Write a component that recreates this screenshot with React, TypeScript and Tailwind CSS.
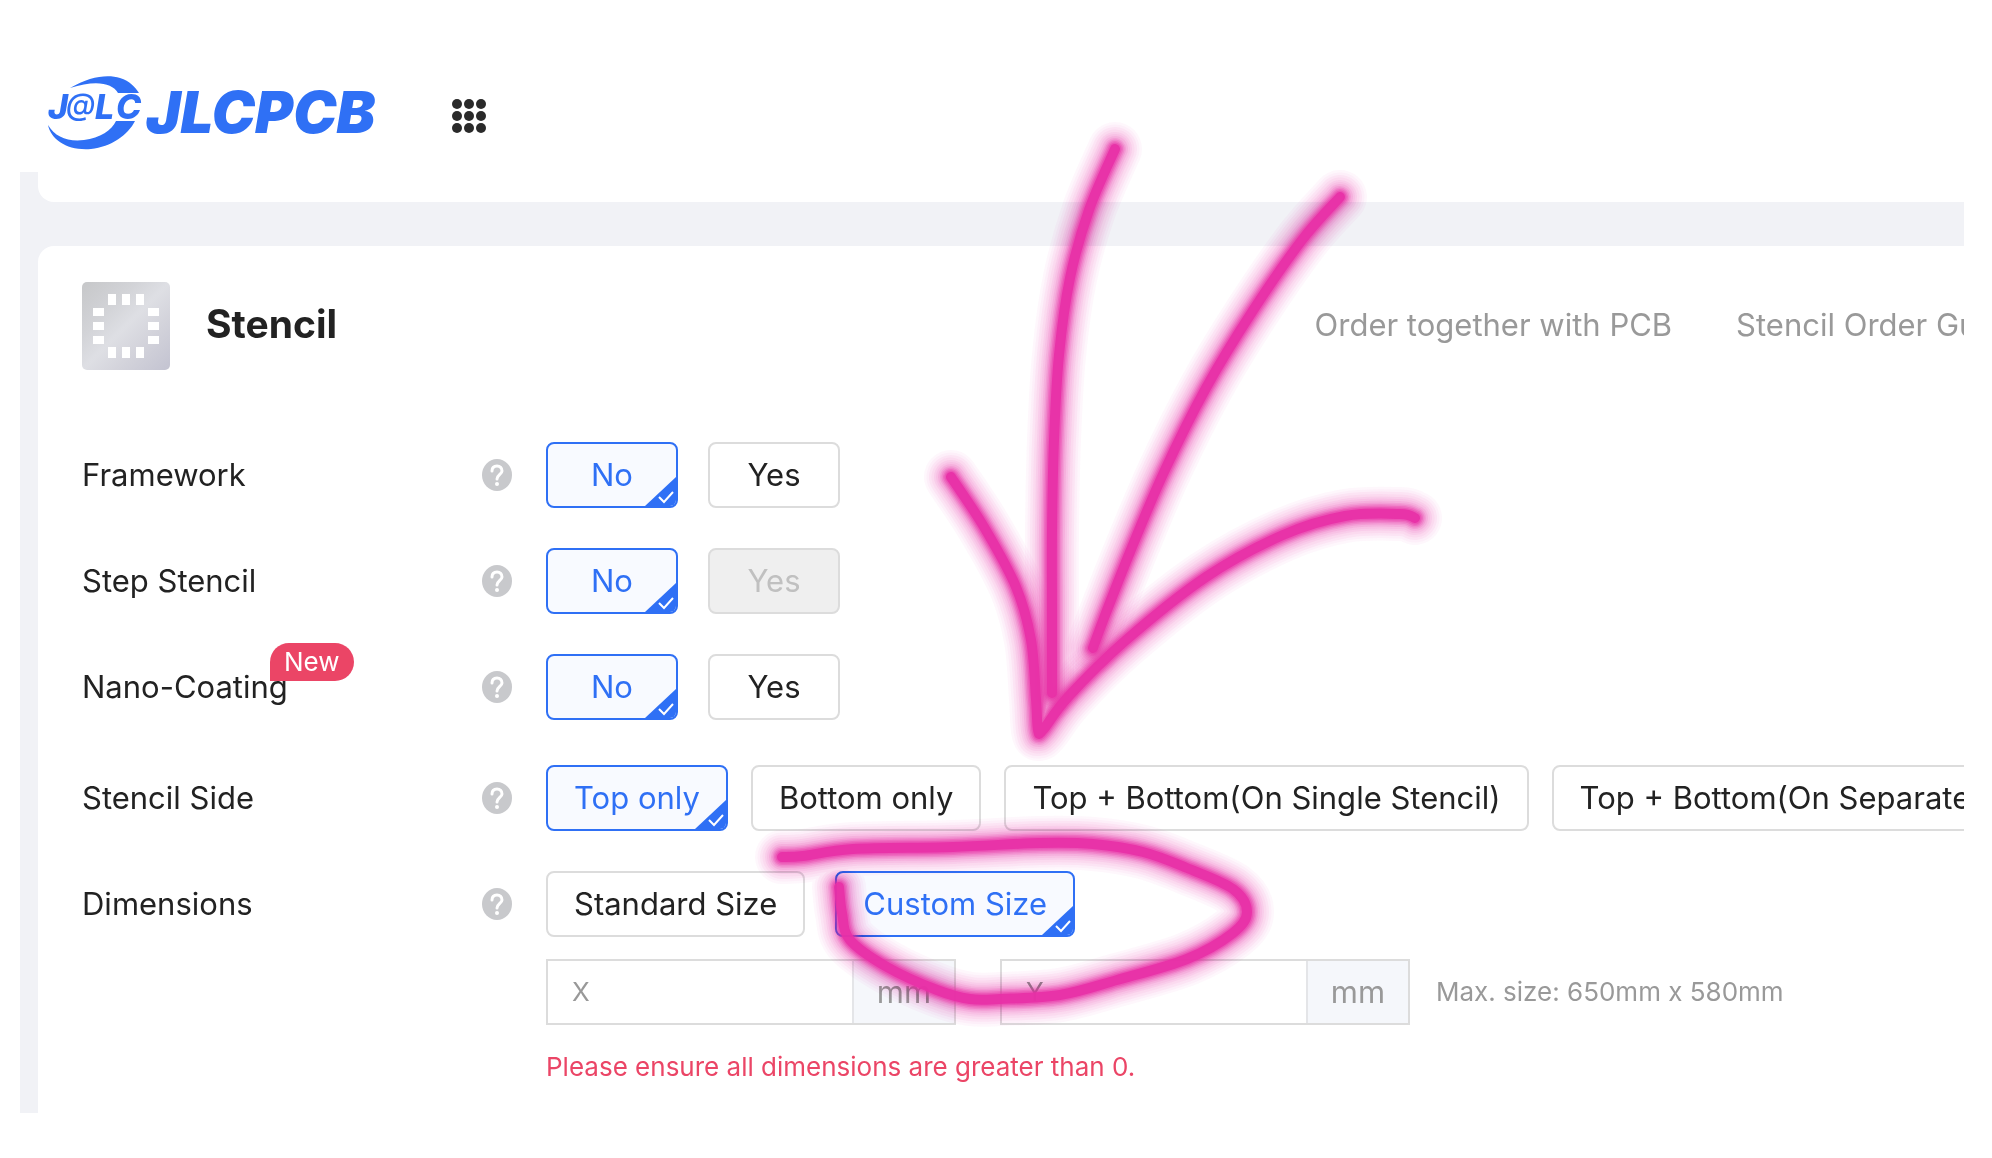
import React, { useState } from "react";
import clsx from "clsx";

type Point = [number, number];

interface Option {
  label: string;
  disabled?: boolean;
}

interface OptionRowProps {
  label: string;
  options: Option[];
  initial: string;
  badge?: string;
  tight?: boolean;
  children?: React.ReactNode;
}

interface Layer {
  width: number;
  opacity: number;
}

// --- Marker strokes drawn over the page ---
const STROKES: Point[][] = [
  [[1115, 149], [1089, 210], [1070, 278], [1059, 355], [1054, 440], [1052, 531], [1052, 610], [1052, 693]],
  [[1340, 197], [1302, 240], [1252, 312], [1206, 388], [1164, 472], [1130, 552], [1104, 618], [1093, 648]],
  [[951, 477], [984, 527], [1016, 587], [1031, 640], [1036, 699], [1038, 730], [1043, 730], [1068, 697], [1125, 641], [1206, 577], [1283, 535], [1345, 516], [1400, 514], [1415, 518]],
  [[782, 857], [803, 856], [853, 849], [953, 847], [1040, 843], [1093, 844], [1143, 852], [1187, 868], [1233, 889], [1247, 912], [1233, 933], [1187, 959], [1117, 980], [1060, 995], [1000, 999], [970, 999], [937, 990], [887, 967], [850, 940], [842, 913], [839, 887]],
];

// Wide faint strokes tint what is below, the narrow ones cover it
const GLOW: Layer[] = [
  { width: 54, opacity: 0.04 },
  { width: 49, opacity: 0.04 },
  { width: 44, opacity: 0.05 },
  { width: 39, opacity: 0.05 },
  { width: 34, opacity: 0.07 },
  { width: 30, opacity: 0.08 },
  { width: 26, opacity: 0.11 },
];

const CORE: Layer[] = [
  { width: 22, opacity: 0.15 },
  { width: 19, opacity: 0.2 },
  { width: 16, opacity: 0.28 },
  { width: 13, opacity: 0.38 },
  { width: 10, opacity: 0.9 },
];

const smoothPath = (points: Point[]) =>
  points.slice(1).reduce((d, p2, i) => {
    const p0 = points[Math.max(0, i - 1)];
    const p1 = points[i];
    const p3 = points[Math.min(points.length - 1, i + 2)];
    const c1 = `${p1[0] + (p2[0] - p0[0]) / 6} ${p1[1] + (p2[1] - p0[1]) / 6}`;
    const c2 = `${p2[0] - (p3[0] - p1[0]) / 6} ${p2[1] - (p3[1] - p1[1]) / 6}`;
    return `${d} C${c1} ${c2} ${p2[0]} ${p2[1]}`;
  }, `M${points[0][0]} ${points[0][1]}`);

const Scribble = ({ layers, multiply }: { layers: Layer[]; multiply?: boolean }) => (
  <svg
    width="1992"
    height="1158"
    viewBox="0 0 1992 1158"
    fill="none"
    aria-hidden="true"
    className={clsx("absolute top-0 left-0 max-w-none pointer-events-none", multiply && "mix-blend-multiply")}
  >
    {STROKES.map((points, i) => (
      <g key={i} stroke="#e830a6" strokeLinecap="round" strokeLinejoin="round">
        {layers.map((l) => (
          <path key={l.width} d={smoothPath(points)} strokeWidth={l.width} strokeOpacity={l.opacity} />
        ))}
      </g>
    ))}
  </svg>
);

const Logo = () => (
  <svg width="340" height="80" viewBox="0 0 340 80" fill="#2f70f5" role="img" aria-label="JLCPCB">
    <path d="M22 12 C42 0 60 -2 72 2 C82 5 87 11 91 17 L70 17 C64 6 46 4 22 12 Z" />
    <path d="M0 49 C7 61 20 66 36 64 C52 62 64 54 68 45 L87 45 C80 59 63 71 43 73 C20 75 3 64 0 49 Z" />
    <g fontFamily="Inter, sans-serif">
      <text x="0" y="43" fontSize="34" fontWeight="800" fontStyle="italic">J</text>
      <text x="18" y="39" fontSize="30" fontWeight="500" fontStyle="italic">@</text>
      <text x="47" y="43" fontSize="34" fontWeight="800" fontStyle="italic">L</text>
      <text x="68" y="43" fontSize="34" fontWeight="800" fontStyle="italic">C</text>
      <text x="98" y="57" fontSize="58" fontWeight="900" fontStyle="italic">JLCPCB</text>
    </g>
  </svg>
);

const GridDots = () => (
  <svg width="34" height="34" viewBox="0 0 34 34" fill="#2a2a2a" aria-hidden="true">
    {[5, 17, 29].map((y) => [5, 17, 29].map((x) => <circle key={`${x}-${y}`} cx={x} cy={y} r="5" />))}
  </svg>
);

const StencilIcon = () => (
  <svg width="88" height="88" viewBox="0 0 88 88" aria-hidden="true" className="shrink-0">
    <defs>
      <linearGradient id="steel" x1="0" y1="0" x2="1" y2="1">
        <stop offset="0" stopColor="#c6c7c9" />
        <stop offset="0.3" stopColor="#d2d3d7" />
        <stop offset="0.5" stopColor="#dedfe4" />
        <stop offset="0.7" stopColor="#d3d3db" />
        <stop offset="1" stopColor="#c3c3d1" />
      </linearGradient>
    </defs>
    <rect width="88" height="88" rx="5" fill="url(#steel)" />
    <g fill="#fff">
      {[26, 40, 54].map((n) => (
        <React.Fragment key={n}>
          <rect x={n} y="12" width="8" height="11" />
          <rect x={n} y="65" width="8" height="11" />
          <rect x="11" y={n} width="11" height="8" />
          <rect x="66" y={n} width="11" height="8" />
        </React.Fragment>
      ))}
    </g>
  </svg>
);

const HelpIcon = () => (
  <svg width="30" height="32" viewBox="0 0 30 32" fill="none" aria-hidden="true">
    <ellipse cx="15" cy="16" rx="15" ry="16" fill="#c8c9cc" />
    <path d="M10 12 C10 8 12 7 15 7 C18 7 20 9 20 12 C20 15 15 16 15 20" stroke="#fff" strokeWidth="3" strokeLinecap="round" />
    <circle cx="15" cy="25" r="2" fill="#fff" />
  </svg>
);

const CheckCorner = () => (
  <svg width="31" height="29" viewBox="0 0 31 29" fill="none" aria-hidden="true" className="absolute right-0 bottom-0">
    <path d="M31 0 V29 H0 Z" fill="#2f70f5" />
    <path d="M14 20 L19 25 L28 15" stroke="#fff" strokeWidth="2" />
  </svg>
);

const OptionRow = ({ label, options, initial, badge, tight, children }: OptionRowProps) => {
  const [selected, setSelected] = useState(initial);

  return (
    <div className="flex items-start">
      <div className="flex h-[66px] w-[464px] shrink-0 items-center">
        <span className="relative w-[400px]">
          {label}
          {badge && (
            <span className="absolute -top-6 left-[188px] h-[38px] rounded-[19px] rounded-bl-none bg-[#eb4566] px-[14px] text-[26px] leading-[38px] text-white">
              {badge}
            </span>
          )}
        </span>
        <button type="button" aria-label={`About ${label}`}>
          <HelpIcon />
        </button>
      </div>
      <div className="flex flex-col">
        <div role="group" aria-label={label} className={clsx("flex", tight ? "gap-[23px]" : "gap-[30px]")}>
          {options.map((option) => {
            const active = option.label === selected;
            return (
              <button
                key={option.label}
                type="button"
                disabled={option.disabled}
                aria-pressed={active}
                onClick={() => setSelected(option.label)}
                className={clsx(
                  "relative h-[66px] min-w-[132px] shrink-0 overflow-hidden rounded-lg border-2 px-[26px] whitespace-nowrap",
                  active && "border-[#2f70f5] bg-[#f8faff] text-[#2f70f5]",
                  !active && !option.disabled && "border-[#dcdcdc] bg-white",
                  option.disabled && "border-[#dcdcdc] bg-[#efefef] text-[#c0c0c0]"
                )}
              >
                {option.label}
                {active && <CheckCorner />}
              </button>
            );
          })}
        </div>
        {children}
      </div>
    </div>
  );
};

const SizeInput = ({ axis }: { axis: string }) => {
  const [value, setValue] = useState("");

  return (
    <label className="flex h-[66px] w-[410px] border-2 border-[#dcdcdc]">
      <input
        type="text"
        aria-label={`${axis} dimension`}
        placeholder={axis}
        value={value}
        onChange={(e) => setValue(e.target.value)}
        className="min-w-0 flex-1 px-6 text-[26px] outline-none placeholder:text-[#999999]"
      />
      <span className="flex w-[102px] items-center justify-center border-l-2 border-[#e4e5e8] bg-[#f5f7fb] text-[31px] text-[#999999]">
        mm
      </span>
    </label>
  );
};

const App = () => {
  return (
    <div className="relative isolate min-h-screen overflow-hidden bg-white font-['Inter',sans-serif] text-[31px] leading-10 text-[#222222]">
      {/* Top bar */}
      <header className="flex h-[172px] items-center gap-16 pt-[60px] pl-12">
        <a href="#home">
          <Logo />
        </a>
        <button type="button" aria-label="All services">
          <GridDots />
        </button>
      </header>

      <main className="mr-7 ml-5 overflow-hidden bg-[#f1f2f6] pl-[18px]">
        <div className="h-[30px] rounded-bl-2xl bg-white" />

        {/* Stencil options */}
        <section className="mt-11 rounded-tl-2xl bg-white pt-9 pb-[26px] pl-11">
          <div className="-mr-[58px] flex items-center gap-9">
            <StencilIcon />
            <h1 className="pb-1 text-[39px] font-bold">Stencil</h1>
            <nav className="ml-auto flex gap-16 pb-[2px] whitespace-nowrap text-[#999999]">
              <a href="#with-pcb">Order together with PCB</a>
              <a href="#guide">Stencil Order Guide</a>
            </nav>
          </div>

          <div className="mt-[72px] flex flex-col gap-10">
            <OptionRow label="Framework" options={[{ label: "No" }, { label: "Yes" }]} initial="No" />
            <OptionRow label="Step Stencil" options={[{ label: "No" }, { label: "Yes", disabled: true }]} initial="No" />
            <OptionRow label="Nano-Coating" badge="New" options={[{ label: "No" }, { label: "Yes" }]} initial="No" />
            <div className="mt-[5px]">
              <OptionRow
                label="Stencil Side"
                tight
                options={[
                  { label: "Top only" },
                  { label: "Bottom only" },
                  { label: "Top + Bottom(On Single Stencil)" },
                  { label: "Top + Bottom(On Separate Stencil)" },
                ]}
                initial="Top only"
              />
            </div>
            <OptionRow label="Dimensions" options={[{ label: "Standard Size" }, { label: "Custom Size" }]} initial="Custom Size">
              <div className="mt-[22px] flex items-center">
                <SizeInput axis="X" />
                <div className="ml-11">
                  <SizeInput axis="Y" />
                </div>
                <span className="ml-[26px] text-[26px] whitespace-nowrap text-[#999999]">Max. size: 650mm x 580mm</span>
              </div>
              <p className="mt-[22px] text-[26px] text-[#eb4566]">Please ensure all dimensions are greater than 0.</p>
            </OptionRow>
          </div>
        </section>
      </main>

      <Scribble layers={GLOW} multiply />
      <Scribble layers={CORE} />
    </div>
  );
};

export default App;
